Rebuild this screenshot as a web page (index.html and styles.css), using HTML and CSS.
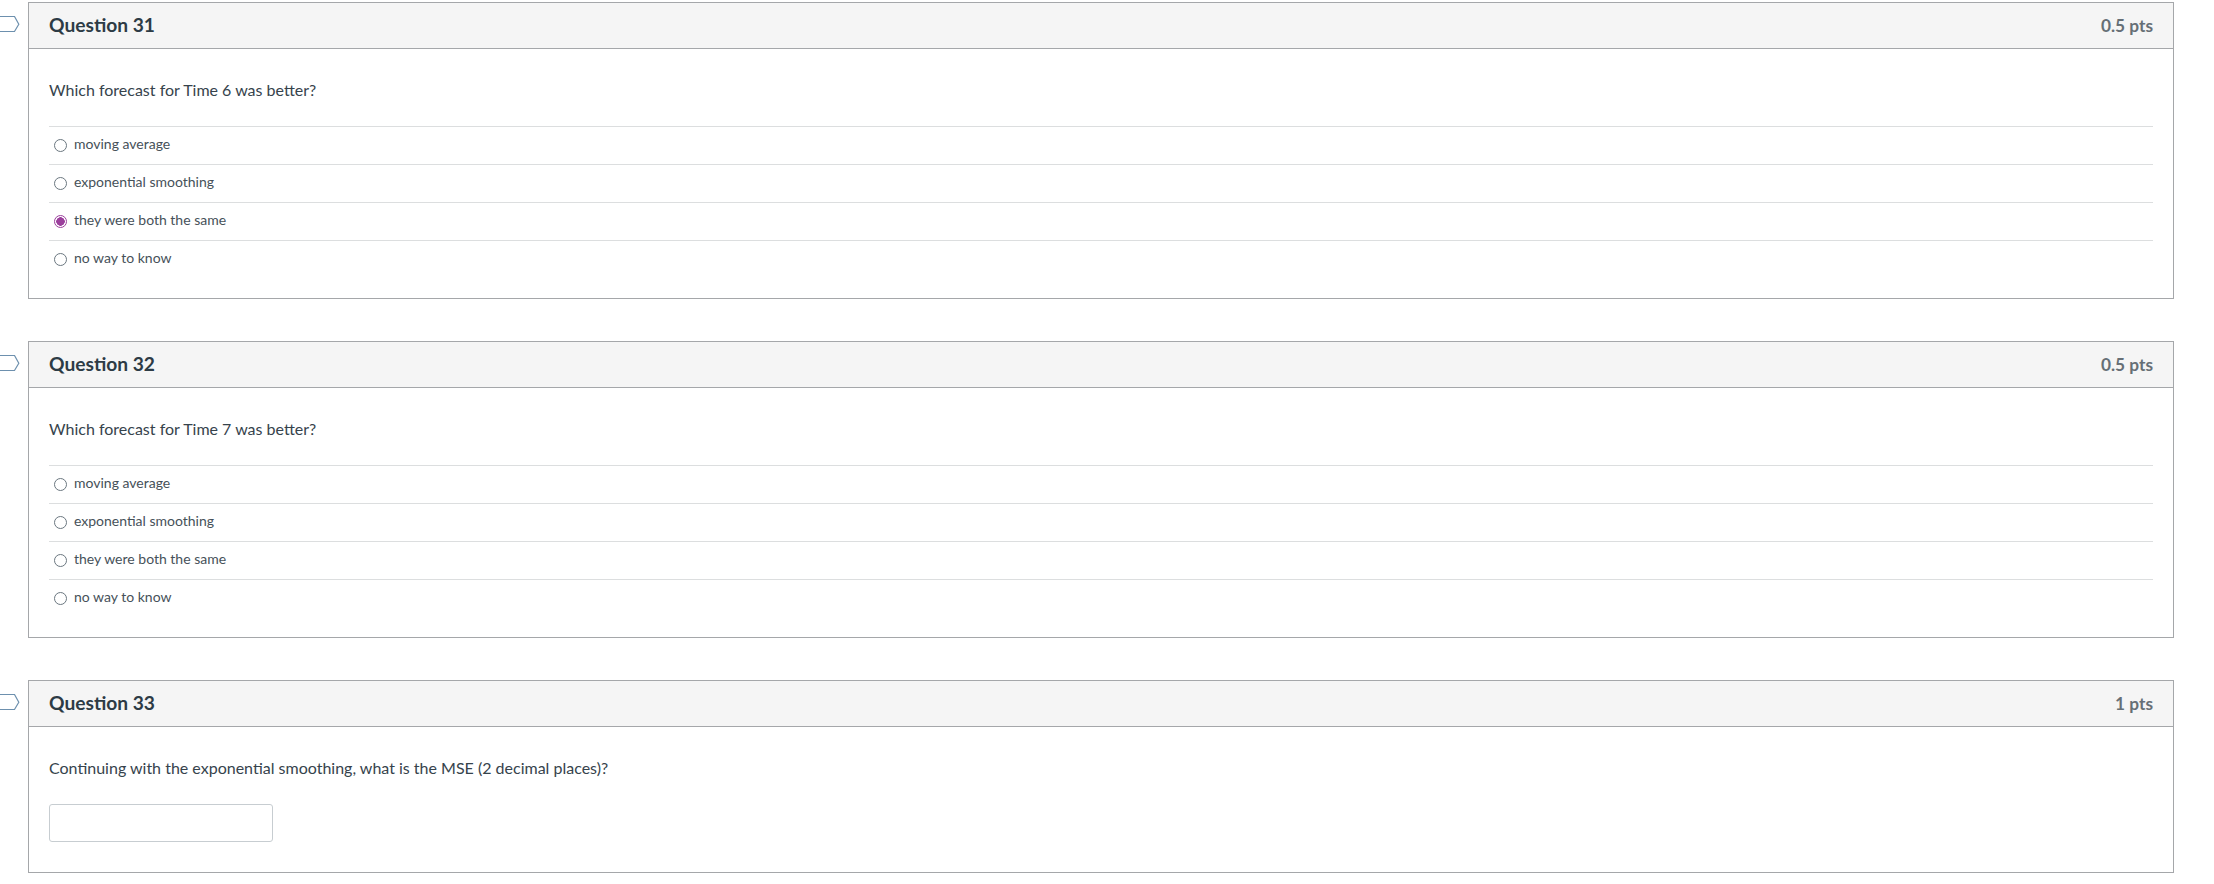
FILE: index.html
```html
<!DOCTYPE html>
<html lang="en">
<head>
<meta charset="utf-8">
<title>Quiz</title>
<link rel="stylesheet" href="styles.css">
</head>
<body>
<main class="quiz">
  <section class="question">
    <svg class="flag" width="20" height="17" viewBox="0 0 20 17"><path d="M-4 .5H14.500L18.800 8.200L14.500 15.500H-4" /></svg>
    <header class="head"><h2 class="title">Question 31</h2><span class="pts">0.5 pts</span></header>
    <div class="body">
      <p class="text">Which forecast for Time 6 was better?</p>
      <div class="answers">
        <div class="answer"><span class="radio"></span><span>moving average</span></div>
        <div class="answer"><span class="radio"></span><span>exponential smoothing</span></div>
        <div class="answer"><span class="radio checked"></span><span>they were both the same</span></div>
        <div class="answer"><span class="radio"></span><span>no way to know</span></div>
      </div>
    </div>
  </section>
  <section class="question">
    <svg class="flag" width="20" height="17" viewBox="0 0 20 17"><path d="M-4 .5H14.500L18.800 8.200L14.500 15.500H-4" /></svg>
    <header class="head"><h2 class="title">Question 32</h2><span class="pts">0.5 pts</span></header>
    <div class="body">
      <p class="text">Which forecast for Time 7 was better?</p>
      <div class="answers">
        <div class="answer"><span class="radio"></span><span>moving average</span></div>
        <div class="answer"><span class="radio"></span><span>exponential smoothing</span></div>
        <div class="answer"><span class="radio"></span><span>they were both the same</span></div>
        <div class="answer"><span class="radio"></span><span>no way to know</span></div>
      </div>
    </div>
  </section>
  <section class="question">
    <svg class="flag" width="20" height="17" viewBox="0 0 20 17"><path d="M-4 .5H14.500L18.800 8.200L14.500 15.500H-4" /></svg>
    <header class="head"><h2 class="title">Question 33</h2><span class="pts">1 pts</span></header>
    <div class="body">
      <p class="text">Continuing with the exponential smoothing, what is the MSE (2 decimal places)?</p>
      <div class="input"></div>
    </div>
  </section>
</main>
</body>
</html>
```
FILE: styles.css
```css
html, body { margin: 0; padding: 0; background: #fff; }
body {
  font-family: Lato, "Open Sans", sans-serif;
  color: #36434c;
  overflow: hidden;
}
.quiz {
  display: flex;
  flex-direction: column;
  gap: 42px;
  width: 2146px;
  margin: 2px 0 0 28px;
}
.question {
  position: relative;
  border: 1px solid #a5a7aa;
  box-sizing: border-box;
  height: 297px;
}
.question:last-child { height: 193px; }
.flag {
  position: absolute;
  left: -29px;
  top: 13px;
  overflow: hidden;
}
.flag path { fill: #fff; stroke: #6d90ae; stroke-width: 1.200; }
.head {
  display: flex;
  justify-content: space-between;
  align-items: center;
  padding: 0 20px 2px;
  height: 43px;
  background: #f5f5f5;
  border-bottom: 1px solid #a5a7aa;
}
.title { margin: 0; font-size: 19.200px; font-weight: 700; color: #2d3b45; }
.pts { padding-top: 2px; font-size: 17.300px; font-weight: 700; color: #666f76; }
.body { padding: 0 20px; }
.text { margin: 0; padding-top: 29px; font-size: 16px; line-height: 24px; }
.answers { padding-top: 24px; }
.answer {
  display: flex;
  align-items: center;
  height: 33px;
  padding-bottom: 4px;
  border-top: 1px solid #dcdedf;
  font-size: 14px;
  color: #465159;
}
.radio {
  width: 13px;
  height: 13px;
  box-sizing: border-box;
  border: 1px solid #6b7780;
  border-radius: 50%;
  margin: 4px 7px 0 5px;
  background: #fff;
}
.radio.checked {
  border: 1.500px solid #9b3f9c;
  background: radial-gradient(circle, #9b3f9c 0 4px, #fff 4.500px);
}
.input {
  width: 224px;
  height: 38px;
  margin-top: 24px;
  box-sizing: border-box;
  border: 1px solid #c7cdd1;
  border-radius: 3px;
  background: #fff;
}
```
